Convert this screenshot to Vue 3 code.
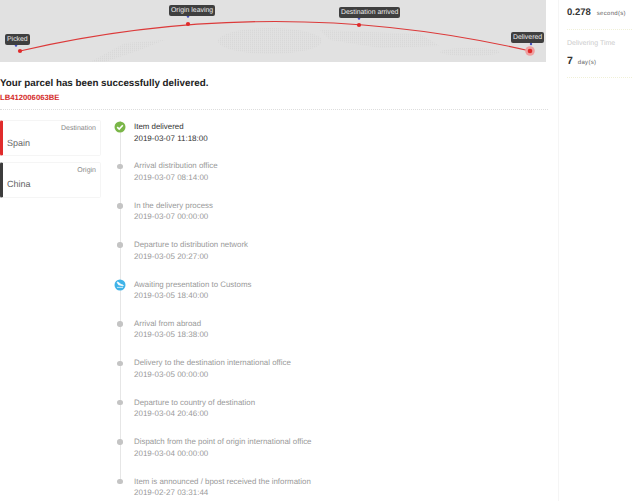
<script setup>
const events = [
  { title: 'Item delivered', time: '2019-03-07 11:18:00', kind: 'done' },
  { title: 'Arrival distribution office', time: '2019-03-07 08:14:00' },
  { title: 'In the delivery process', time: '2019-03-07 00:00:00' },
  { title: 'Departure to distribution network', time: '2019-03-05 20:27:00' },
  { title: 'Awaiting presentation to Customs', time: '2019-03-05 18:40:00', kind: 'plane' },
  { title: 'Arrival from abroad', time: '2019-03-05 18:38:00' },
  { title: 'Delivery to the destination international office', time: '2019-03-05 00:00:00' },
  { title: 'Departure to country of destination', time: '2019-03-04 20:46:00' },
  { title: 'Dispatch from the point of origin international office', time: '2019-03-04 00:00:00' },
  { title: 'Item is announced / bpost received the information', time: '2019-02-27 03:31:44' }
]
const pins = [
  { label: 'Picked', tx: 5, ty: 34 },
  { label: 'Origin leaving', tx: 169, ty: 5 },
  { label: 'Destination arrived', tx: 339, ty: 7 },
  { label: 'Delivered', tx: 511, ty: 32 }
]
</script>

<template>
  <div class="page">
    <main class="main">
      <div class="map">
        <svg class="map-art" width="546" height="62" viewBox="0 0 546 62">
          <defs>
            <pattern id="dots" width="2" height="2" patternUnits="userSpaceOnUse">
              <rect width="1" height="1.4" fill="#d8d8d8" />
            </pattern>
          </defs>
          <rect width="546" height="62" fill="#e1e1e1" />
          <g fill="url(#dots)">
            <path d="M90 62 L125 43 L165 40 L140 50 L105 62Z" />
            <ellipse cx="270" cy="41" rx="52" ry="13" />
            <path d="M320 30 L420 34 L440 46 L380 48 L330 40Z" />
            <ellipse cx="470" cy="52" rx="30" ry="4" />
          </g>
          <path d="M20 51 Q275 -8 530 51" fill="none" stroke="#dc3a3a" stroke-width="1.1" />
          <circle cx="530" cy="51" r="4.8" fill="#eea0a0" />
          <g fill="#e02a2a">
            <circle cx="20" cy="51" r="2.1" />
            <circle cx="188" cy="24" r="2.1" />
            <circle cx="359" cy="25" r="2.1" />
            <circle cx="530" cy="51" r="2.3" />
          </g>
          <g fill="#4450c0">
            <circle cx="16" cy="45.5" r="1.2" />
            <circle cx="188" cy="16.5" r="1.2" />
            <circle cx="359" cy="18.5" r="1.2" />
            <circle cx="531" cy="44" r="1.2" />
          </g>
        </svg>
        <span
          v-for="p in pins"
          :key="p.label"
          class="pin"
          :style="{ left: p.tx + 'px', top: p.ty + 'px' }"
        >{{ p.label }}</span>
      </div>

      <h1 class="headline">Your parcel has been successfully delivered.</h1>
      <div class="code">LB412006063BE</div>

      <div class="body">
        <aside class="places">
          <div class="place dest">
            <div class="place-label">Destination</div>
            <div class="place-name">Spain</div>
          </div>
          <div class="place orig">
            <div class="place-label">Origin</div>
            <div class="place-name">China</div>
          </div>
        </aside>

        <ol class="timeline">
          <li v-for="e in events" :key="e.title + e.time" class="event" :class="{ active: e.kind === 'done' }">
            <span class="marker">
              <svg v-if="e.kind === 'done'" width="12" height="12" viewBox="0 0 12 12">
                <circle cx="6" cy="6" r="5.5" fill="#7ab648" />
                <path d="M3.2 6.1 5.2 8 8.8 4.2" fill="none" stroke="#fff" stroke-width="1.6" />
              </svg>
              <svg v-else-if="e.kind === 'plane'" width="12" height="12" viewBox="0 0 12 12">
                <circle cx="6" cy="6" r="5.5" fill="#3fb3e8" />
                <path d="M3 3.2 4 3 7 5.4 9 6C9.6 6.3 9.4 6.9 8.8 6.8L4.6 5.8 3 3.2ZM3 8.4H9" fill="#fff" stroke="#fff" stroke-width=".7" />
              </svg>
              <span v-else class="dot"></span>
            </span>
            <div class="event-title">{{ e.title }}</div>
            <div class="event-time">{{ e.time }}</div>
          </li>
        </ol>
      </div>
    </main>

    <aside class="side">
      <div class="stat first">
        <span class="num">0.278</span><span class="unit sec">second(s)</span>
      </div>
      <div class="stat">
        <div class="stat-label">Delivering Time</div>
        <span class="num seven">7</span><span class="unit day">day(s)</span>
      </div>
    </aside>
  </div>
</template>

<style>
html, body { margin: 0; background: #fff; overflow: hidden; }
</style>

<style scoped>
.page {
  width: 640px;
  height: 501px;
  overflow: hidden;
  display: flex;
  font-family: "Liberation Sans", Arial, sans-serif;
  color: #333;
  text-rendering: geometricPrecision;
}
.main { width: 548px; flex: none; }
.map { position: relative; width: 546px; height: 62px; }
.map-art { display: block; }
.pin {
  position: absolute;
  padding: 0 2px;
  height: 11px;
  line-height: 11px;
  font-size: 6.9px;
  background: #3f3f3f;
  color: #eee;
  border-radius: 2px;
  white-space: nowrap;
}
.headline {
  margin: 15px 0 0;
  font-size: 9.8px;
  line-height: 14px;
  font-weight: bold;
  color: #222;
}
.code {
  margin-top: 1px;
  font-size: 7.7px;
  line-height: 11px;
  font-weight: bold;
  color: #d42a2a;
  padding-bottom: 6px;
  border-bottom: 1px dotted #ddd;
}
.body { display: flex; padding-top: 10px; }
.places { width: 101px; flex: none; display: flex; flex-direction: column; gap: 6px; }
.place {
  height: 36px;
  box-sizing: border-box;
  border: 1px solid #f5f5f5;
  border-left: 3px solid #333;
  border-radius: 2px;
  padding: 3px 4px 0 4px;
}
.dest { border-left-color: #e02b2b; }
.orig { border-left-color: #3c3c3c; }
.place-label { text-align: right; font-size: 7px; line-height: 10px; color: #888; }
.place-name { margin-top: 3px; font-size: 9px; line-height: 12px; color: #666; }
.orig .place-name { margin-top: 2px; }
.timeline { list-style: none; margin: 1px 0 0 13px; padding: 0; position: relative; }
.event { position: relative; padding-left: 20px; height: 39.4px; box-sizing: border-box; }
.event::before {
  content: "";
  position: absolute;
  left: 6px;
  top: 0;
  bottom: 0;
  width: 1px;
  background: #e6e6e6;
}
.event:last-child::before { bottom: auto; height: 6px; }
.marker {
  position: absolute;
  left: 0;
  top: 0;
  width: 12px;
  height: 12px;
  display: flex;
  align-items: center;
  justify-content: center;
}
.dot { width: 5.5px; height: 5.5px; border-radius: 50%; background: #c4c4c4; }
.event-title, .event-time { line-height: 11.5px; color: #999; white-space: nowrap; }
.event-title { font-size: 7.9px; }
.event-time { font-size: 8px; }
.active .event-title, .active .event-time { color: #333; }
.side {
  width: 82px;
  box-sizing: border-box;
  border-left: 1px solid #f5f5f5;
  margin-left: 10px;
  padding: 2px 0 0 8px;
  flex: none;
}
.stat { width: 65px; height: 39px; box-sizing: border-box; border-bottom: 1px dotted #f0f0d8; }
.stat.first { height: 28px; margin-bottom: 9px; }
.stat-label { font-size: 7px; color: #ccc; line-height: 10px; margin-bottom: 2px; }
.num { font-size: 9.5px; font-weight: bold; color: #333; }
.seven { font-size: 10.5px; }
.unit { font-size: 6px; color: #666; letter-spacing: .3px; margin-left: 6px; }
.day { margin-left: 5px; }
</style>
